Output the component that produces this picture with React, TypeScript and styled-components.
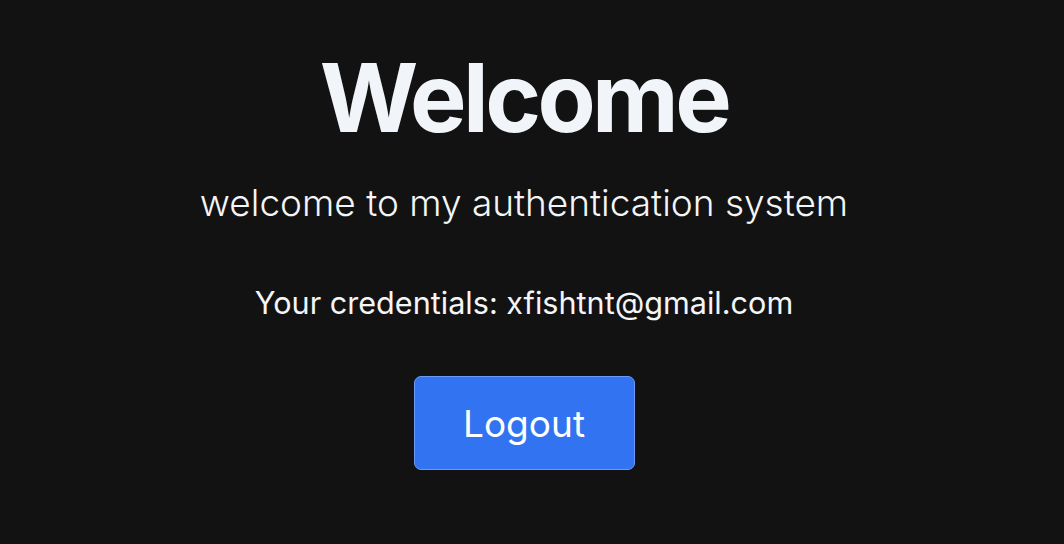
import React from "react";
import styled, { createGlobalStyle } from "styled-components";

const Global = createGlobalStyle`
  html, body { margin: 0; padding: 0; background: #121212; }
  body { font-family: Inter, "Noto Sans", sans-serif; color: #f1f4f8; }
`;

const Page = styled.main`
  width: 1048px;
  height: 544px;
  display: flex;
  flex-direction: column;
  align-items: center;
  box-sizing: border-box;
  padding-top: 48px;
`;

const Title = styled.h1`
  margin: 0;
  font-size: 95px;
  font-weight: 700;
  line-height: 100px;
  letter-spacing: -3.6px;
  color: #f1f4f8;
`;

const Subtitle = styled.p`
  margin: 33px 0 0;
  font-size: 37px;
  font-weight: 300;
  line-height: 44px;
  color: #f4f5f7;
`;

const Credentials = styled.p`
  margin: 60px 0 0;
  font-size: 30.6px;
  font-weight: 400;
  line-height: 36px;
  color: #f4f5f7;
`;

const Button = styled.button`
  margin-top: 55px;
  width: 221px;
  height: 94px;
  border-radius: 7px;
  border: 1.5px solid #6a9af5;
  background: #3173f1;
  color: #ffffff;
  font-family: Inter, "Noto Sans", sans-serif;
  font-size: 37px;
  font-weight: 400;
  cursor: pointer;
`;

export default function App() {
  return (
    <>
      <Global />
      <Page>
        <Title>Welcome</Title>
        <Subtitle>welcome to my authentication system</Subtitle>
        <Credentials>Your credentials: xfishtnt@gmail.com</Credentials>
        <Button>Logout</Button>
      </Page>
    </>
  );
}
